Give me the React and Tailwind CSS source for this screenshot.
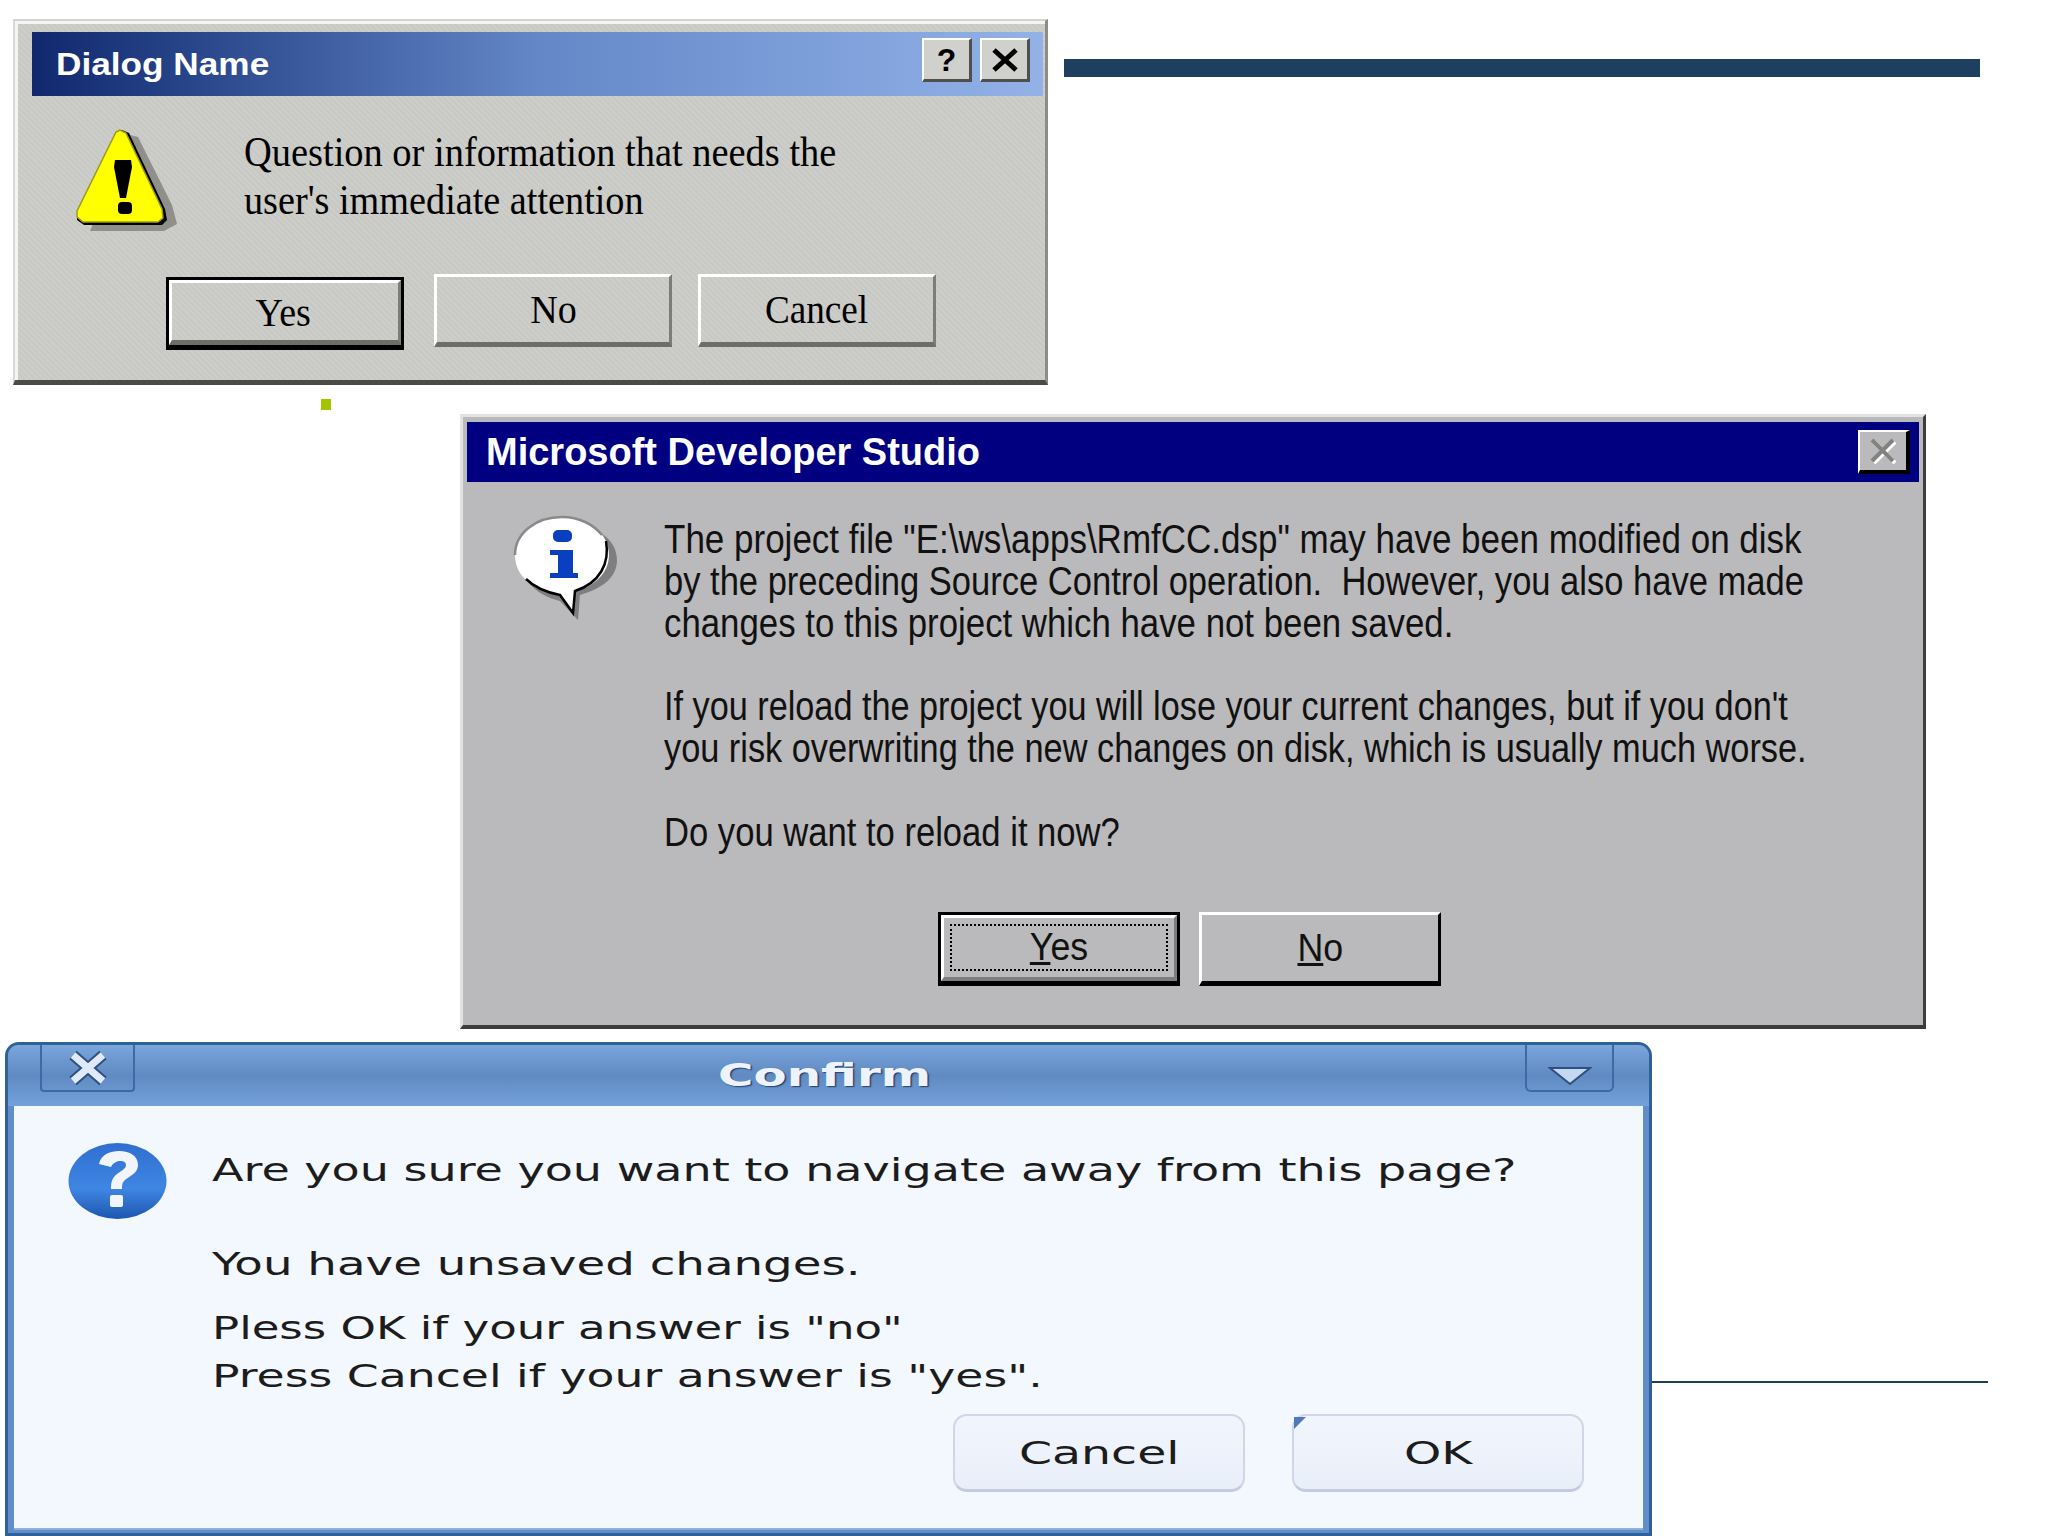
import React from 'react';

const serif = "font-['Liberation_Serif',serif]";
const sans = "font-['Liberation_Sans',sans-serif]";
const dejavu = "font-['DejaVu_Sans',sans-serif]";

// the source image was stretched, so text gets squeezed or widened on one axis
const Line = ({ className = '', children }) => (
    <div className={`whitespace-nowrap origin-left ${className}`}>{children}</div>
);

const WarningIcon = () => (
    <svg width="130" height="130" viewBox="0 0 130 130" className="shrink-0">
        <path d="M30 116 L104 116 L117 109 L112 90 L78 22 L70 20 Z" fill="#8f8f8c" />
        <path d="M62 15 L56 17 L17 96 L17 105 L24 110 L102 110 L107 105 L105 94 L69 18 Z" fill="#000" />
        <path d="M60 15 L56 17 L17 96 L17 102 L23 107 L98 107 L103 103 L102 94 L66 18 Z" fill="#ffff00" stroke="#9c9c18" strokeWidth="1.5" />
        <path d="M55 45 L71 45 L72 52 L66 83 L60 83 L54 52 Z" fill="#000" />
        <rect x="58" y="87" width="14" height="12" rx="4" fill="#000" />
    </svg>
);

const InfoIcon = () => (
    <svg width="130" height="130" viewBox="0 0 130 130" className="shrink-0">
        <path d="M62 18 C92 18 117 32 117 55 C117 74 100 84 80 90 L78 115 L60 96 C36 90 22 76 22 55 C22 32 42 18 62 18 Z" fill="#7e7e80" />
        <path d="M62 12 C88 12 109 28 109 50 C109 68 94 82 75 86 L73 108 L60 90 C34 86 15 72 15 50 C15 28 36 12 62 12 Z" fill="#fff" />
        <path d="M106 36 C110 58 100 78 75 86 L73 108 L60 90 C50 88 36 84 26 74" fill="none" stroke="#000" strokeWidth="2.5" />
        <path d="M15 50 C15 28 36 12 62 12 C80 12 94 20 102 30" fill="none" stroke="#8a8a8a" strokeWidth="2.5" />
        <rect x="53" y="25" width="19" height="12" rx="5" fill="#0a3fc0" />
        <path d="M50 45 L73 45 L73 68 L78 68 L78 73 L50 73 L50 68 L58 68 L58 50 L50 50 Z" fill="#0a3fc0" />
    </svg>
);

const QuestionIcon = () => (
    <svg width="130" height="100" viewBox="0 0 130 100" className="shrink-0">
        <defs>
            <linearGradient id="qblue" x1="0" y1="0" x2="0" y2="1">
                <stop offset="0" stopColor="#2f6fd0" />
                <stop offset="0.6" stopColor="#3f86e2" />
                <stop offset="1" stopColor="#1c56b0" />
            </linearGradient>
        </defs>
        <ellipse cx="62.5" cy="51" rx="49" ry="38" fill="url(#qblue)" />
        <path d="M44 34 C46 24 56 21 64 21 C75 21 83 26 83 35 C83 43 75 46 70 50 C67 53 67 55 67 59 L56 59 C56 52 57 48 62 44 C67 40 71 39 71 35 C71 30 60 29 56 37 Z" fill="#f2f5fb" />
        <rect x="55" y="65" width="13" height="12" rx="2" fill="#f2f5fb" />
    </svg>
);

const ClassicButton = ({ isDefault, className = '', children }) => (
    <div className={`${isDefault ? 'border-[3px] border-b-[5px] border-black mt-[3px]' : ''} h-[73px] w-[238px] ${className}`}>
        <div className="h-full flex items-center justify-center border-t-[3px] border-l-[3px] border-t-white border-l-white border-b-[5px] border-r-[3px] border-b-[#6d6d69] border-r-[#7c7c78]">
            {children}
        </div>
    </div>
);

const LooseDialog = () => (
    <div className="absolute left-[13px] top-[19px] w-[1035px] h-[366px] border-t-[2px] border-t-[#d2d2d0] border-l-[2px] border-l-[#d8d8d6] border-r-[3px] border-r-[#8c8c8a] border-b-[5px] border-b-[#4b4b49] bg-[repeating-linear-gradient(45deg,#cdcdc9_0px,#cdcdc9_2px,#c8c8c4_2px,#c8c8c4_4px)] shadow-[inset_0_3px_0_#f4f4f2,inset_3px_0_0_#f4f4f2]">
        <div className="ml-[17px] mr-[2px] mt-[11px] h-[64px] flex items-center justify-between pl-[24px] pr-[13px] bg-linear-to-r from-[#11286e] via-[#6487c7] to-[#92b2e8]">
            <span className={`${sans} text-[32px] font-bold text-white origin-left scale-x-[1.1] whitespace-nowrap`}>Dialog Name</span>
            <div className="flex gap-[8px] mb-[8px]">
                <div className="w-[50px] h-[44px] flex items-center justify-center bg-[#d0d0cc] border-t-[2px] border-l-[2px] border-t-white border-l-white border-b-[3px] border-r-[3px] border-b-[#4f4f4d] border-r-[#4f4f4d]">
                    <span className={`${sans} text-[32px] font-bold text-black leading-none`}>?</span>
                </div>
                <div className="w-[50px] h-[44px] flex items-center justify-center bg-[#d0d0cc] border-t-[2px] border-l-[2px] border-t-white border-l-white border-b-[3px] border-r-[3px] border-b-[#4f4f4d] border-r-[#4f4f4d]">
                    <svg width="28" height="24" viewBox="0 0 28 24"><path d="M3 2 L25 22 M25 2 L3 22" stroke="#000" strokeWidth="5" /></svg>
                </div>
            </div>
        </div>
        <div className="flex pl-[45px] mt-[19px]">
            <WarningIcon />
            <div className={`${serif} ml-[54px] mt-[13px] text-[42px] leading-[48px] text-black`}>
                <Line className="scale-x-[0.915]">Question or information that needs the</Line>
                <Line className="scale-x-[0.91]">user's immediate attention</Line>
            </div>
        </div>
        <div className={`${serif} flex items-start pl-[151px] mt-[29px] gap-[30px] text-[40px] text-black`}>
            <ClassicButton isDefault><span className="scale-x-[0.95] pt-[3px] pr-[3px]">Yes</span></ClassicButton>
            <ClassicButton><span className="scale-x-[0.95]">No</span></ClassicButton>
            <ClassicButton className="-ml-[4px]"><span className="scale-x-[0.93]">Cancel</span></ClassicButton>
        </div>
    </div>
);

const StudioDialog = () => (
    <div className="absolute left-[460px] top-[414px] w-[1466px] h-[615px] bg-[#bab9bb] border-t-[3px] border-t-[#e2e2e2] border-l-[3px] border-l-[#e2e2e2] border-r-[3px] border-r-[#3c3c3c] border-b-[4px] border-b-[#3c3c3c]">
        <div className="ml-[4px] mr-[4px] mt-[5px] h-[60px] flex items-center justify-between pl-[19px] pr-[9px] bg-[#000080]">
            <span className={`${sans} text-[38px] font-bold text-white whitespace-nowrap`}>Microsoft Developer Studio</span>
            <div className="w-[52px] h-[44px] flex items-center justify-center bg-[#bab9bb] border-t-[2px] border-l-[2px] border-t-white border-l-white border-b-[4px] border-r-[4px] border-b-black border-r-black">
                <svg width="28" height="26" viewBox="0 0 28 26">
                    <path d="M5 4 L26 25 M26 4 L5 25" stroke="#fff" strokeWidth="4" />
                    <path d="M3 2 L24 23 M24 2 L3 23" stroke="#83827f" strokeWidth="4" />
                </svg>
            </div>
        </div>
        <div className="flex pl-[37px] mt-[23px] items-start">
            <InfoIcon />
            <div className={`${sans} ml-[34px] mt-[13px] text-[40px] leading-[42px] text-[#111]`}>
                <Line className="scale-x-[0.875]">The project file "E:\ws\apps\RmfCC.dsp" may have been modified on disk</Line>
                <Line className="scale-x-[0.863]">by the preceding Source Control operation.&nbsp; However, you also have made</Line>
                <Line className="scale-x-[0.87]">changes to this project which have not been saved.</Line>
                <Line className="scale-x-[0.856] mt-[41px]">If you reload the project you will lose your current changes, but if you don't</Line>
                <Line className="scale-x-[0.858]">you risk overwriting the new changes on disk, which is usually much worse.</Line>
                <Line className="scale-x-[0.865] mt-[42px]">Do you want to reload it now?</Line>
            </div>
        </div>
        <div className={`${sans} flex pl-[475px] mt-[59px] gap-[19px] text-[38px] text-[#111]`}>
            <div className="w-[242px] h-[74px] border-[3px] border-b-[5px] border-black">
                <div className="h-full border-t-[3px] border-l-[3px] border-t-white border-l-white border-b-[4px] border-r-[3px] border-b-[#7e7d7f] border-r-[#7e7d7f] p-[6px]">
                    <div className="h-full flex items-center justify-center border-[2px] border-dotted border-black">
                        <span className="scale-x-[0.94]"><span className="underline">Y</span>es</span>
                    </div>
                </div>
            </div>
            <div className="w-[242px] h-[74px] flex items-center justify-center border-t-[3px] border-l-[3px] border-t-white border-l-white border-b-[5px] border-r-[3px] border-b-black border-r-black">
                <span className="scale-x-[0.94]"><span className="underline">N</span>o</span>
            </div>
        </div>
    </div>
);

const ModernButton = ({ children }) => (
    <div className="w-[292px] h-[78px] flex items-center justify-center rounded-[14px] border-[2px] border-[#cfd6e8] border-b-[3px] border-b-[#c3cbdf] bg-linear-to-b from-[#f1f5fd] to-[#e9eff9]">
        <span className="scale-x-[1.48]">{children}</span>
    </div>
);

const ConfirmDialog = () => (
    <div className="absolute left-[5px] top-[1042px] w-[1647px] h-[494px] flex flex-col rounded-t-[14px] border-t-[3px] border-t-[#2f6098] border-l-[3px] border-r-[3px] border-b-[3px] border-[#2f6098] bg-[#5f8ecb]">
        <div className="h-[61px] shrink-0 flex items-start justify-between pl-[32px] pr-[35px] bg-linear-to-b from-[#7ba6dc] via-[#5f8ac2] to-[#75a1da] rounded-t-[10px]">
            <div className="w-[95px] h-[47px] flex items-center justify-center border-[2px] border-t-0 border-[#3d6aa6] rounded-b-[4px]">
                <svg width="44" height="36" viewBox="0 0 44 36">
                    <path d="M7 5 L37 31 M37 5 L7 31" stroke="#2e4f80" strokeWidth="11" />
                    <path d="M7 5 L37 31 M37 5 L7 31" stroke="#dfe9f8" strokeWidth="7" />
                </svg>
            </div>
            <span className={`${dejavu} text-[32px] font-bold text-[#eef3fb] mt-[10px] -ml-[10px] leading-[40px] scale-x-[1.51] [text-shadow:1px_1px_1px_#23406e]`}>Confirm</span>
            <div className="w-[89px] h-[47px] flex items-center justify-center border-[2px] border-t-0 border-[#3d6aa6] rounded-b-[6px]">
                <svg width="44" height="20" viewBox="0 0 44 20" className="mt-[16px]">
                    <path d="M2 2 L42 2 L22 18 Z" fill="#c4d8f2" stroke="#2e4f80" strokeWidth="2" />
                </svg>
            </div>
        </div>
        <div className={`${dejavu} flex-1 mx-[6px] mb-[3px] bg-[#f3f7fe] text-[#1c1c1c] text-[32px] border-b-[2px] border-b-[#8fb0dc]`}>
            <div className="flex items-start pl-[41px] pt-[24px]">
                <QuestionIcon />
                <div className="ml-[27px] leading-[48px] -mt-[1px]">
                    <Line className="scale-x-[1.438] mt-[17px]">Are you sure you want to navigate away from this page?</Line>
                    <Line className="scale-x-[1.459] mt-[46px]">You have unsaved changes.</Line>
                    <Line className="scale-x-[1.407] mt-[16px]">Pless OK if your answer is "no"</Line>
                    <Line className="scale-x-[1.428]">Press Cancel if your answer is "yes".</Line>
                </div>
            </div>
            <div className="flex justify-end gap-[47px] pr-[59px] mt-[14px]">
                <ModernButton>Cancel</ModernButton>
                <div className="relative">
                    <ModernButton>OK</ModernButton>
                    <div className="absolute left-[2px] top-[3px] w-0 h-0 border-t-[12px] border-r-[12px] border-t-[#4f79b8] border-r-transparent" />
                </div>
            </div>
        </div>
    </div>
);

const App = () => (
    <div className="relative w-[2048px] h-[1536px] overflow-hidden bg-white">
        {/* slide decorations behind the windows */}
        <div className="absolute left-[1064px] top-[59px] w-[916px] h-[18px] bg-[#1f3f60]" />
        <div className="absolute left-[1652px] top-[1381px] w-[336px] h-[2px] bg-[#1f3f60]" />
        <div className="absolute left-[321px] top-[399px] w-[10px] h-[11px] bg-[#a5c400]" />
        <LooseDialog />
        <StudioDialog />
        <ConfirmDialog />
    </div>
);

export default App;
